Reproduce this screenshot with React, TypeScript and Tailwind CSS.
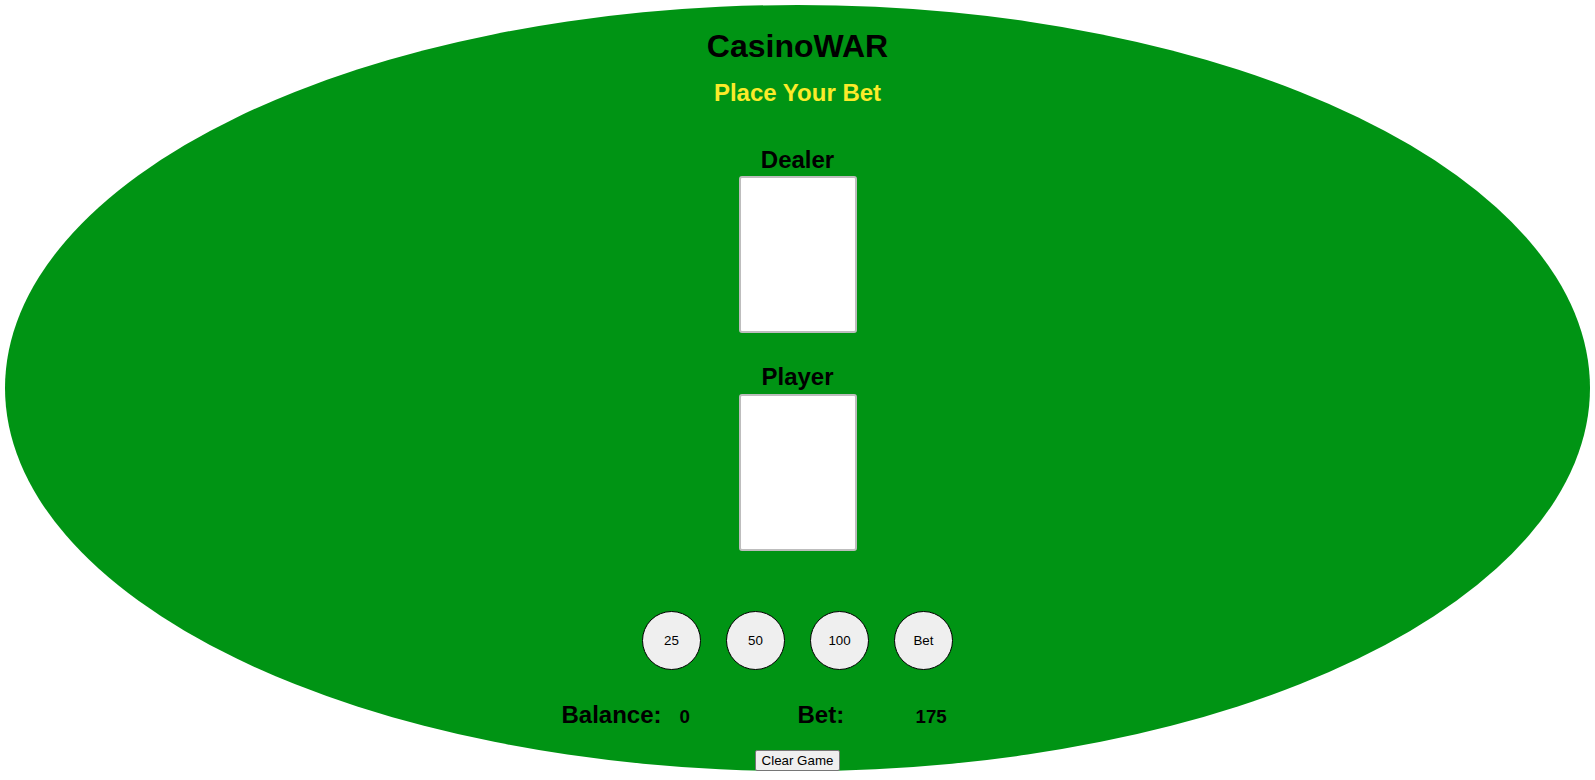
import React from 'react';

const chips = ['25', '50', '100', 'Bet'];

const Card: React.FC = () => (
  <div className="w-[118px] h-[157px] bg-white border-2 border-[#bdbdbd] rounded-[3px]" />
);

const App: React.FC = () => {
  return (
    <div className="w-full h-[780px] bg-white font-['Liberation_Sans',Arial,sans-serif] text-black">
      {/* Table */}
      <div className="mx-[5px] mt-[5px] h-[766px] bg-[#009414] rounded-[50%] flex flex-col items-center pt-[23px]">
        <h1 className="text-[32px] leading-[37px] font-bold">CasinoWAR</h1>
        <h2 className="mt-[14px] text-[24px] leading-[28px] font-bold text-[#fbeb2a]">Place Your Bet</h2>

        {/* Dealer */}
        <h2 className="mt-[39px] text-[24px] leading-[28px] font-bold">Dealer</h2>
        <div className="mt-[2px]">
          <Card />
        </div>

        {/* Player */}
        <h2 className="mt-[30px] text-[24px] leading-[28px] font-bold">Player</h2>
        <div className="mt-[3px]">
          <Card />
        </div>

        {/* Chips */}
        <div className="mt-[60px] flex gap-[25px]">
          {chips.map((c) => (
            <button
              key={c}
              className="w-[59px] h-[59px] rounded-full border border-black bg-[#efefef] text-[13.33px] text-black"
            >
              {c}
            </button>
          ))}
        </div>

        {/* Balance / Bet */}
        <div className="mt-[31px] grid grid-cols-[118px_118px_118px_118px] items-baseline">
          <h2 className="text-[24px] leading-[28px] font-bold">Balance:</h2>
          <h3 className="text-[18.72px] leading-[22px] font-bold">0</h3>
          <h2 className="text-[24px] leading-[28px] font-bold">Bet:</h2>
          <h3 className="text-[18.72px] leading-[22px] font-bold">175</h3>
        </div>

        <button className="mt-[21px] px-[6px] py-[1px] h-[21px] text-[13.33px] leading-[17px] bg-[#efefef] border border-[#767676] rounded-[2px] text-black">
          Clear Game
        </button>
      </div>
    </div>
  );
};

export default App;
